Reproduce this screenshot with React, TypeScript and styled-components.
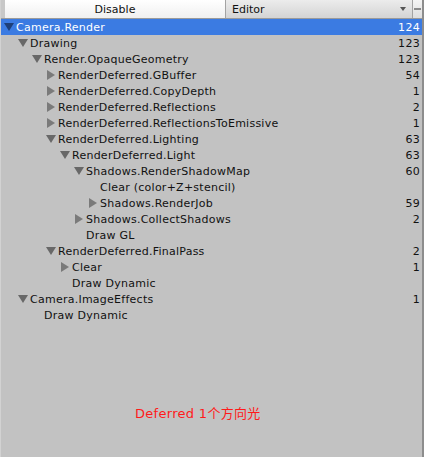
import React from 'react';
import styled, { createGlobalStyle } from 'styled-components';

const Global = createGlobalStyle`
  html, body {
    margin: 0;
    padding: 0;
    background: #c2c2c2;
  }
  body {
    font-family: 'DejaVu Sans', 'Noto Sans CJK SC', sans-serif;
    font-size: 11px;
  }
`;

const Panel = styled.div`
  width: 424px;
  height: 457px;
  display: flex;
  flex-direction: column;
  background: #c2c2c2;
  border-right: 2px solid #8d8d8d;
  border-left: 1px solid #d2d2d2;
  box-sizing: border-box;
  overflow: hidden;
`;

const Toolbar = styled.div`
  display: flex;
  height: 19px;
  border-bottom: 1px solid #9a9a9a;
  box-sizing: border-box;
  background: linear-gradient(#f4f4f4, #dedede);
`;

const ToggleCell = styled.div`
  width: 225px;
  display: flex;
  align-items: center;
  justify-content: center;
  color: #111;
  background: linear-gradient(#ffffff, #f0f0f0);
  border-left: 4px solid #c8c8c8;
  border-right: 1px solid #a3a3a3;
  box-sizing: border-box;
`;

const Dropdown = styled.div`
  flex: 1;
  display: flex;
  align-items: center;
  justify-content: space-between;
  padding: 0 6px 0 6px;
  color: #111;
  background: linear-gradient(#ececec, #d4d4d4);
  border-right: 1px solid #a3a3a3;
`;

const Caret = styled.span`
  width: 0;
  height: 0;
  border-left: 3px solid transparent;
  border-right: 3px solid transparent;
  border-top: 4px solid #555;
`;

const Minus = styled.div`
  width: 9px;
  display: flex;
  align-items: center;
  justify-content: center;
  &::after {
    content: '';
    width: 7px;
    height: 2px;
    background: #8a8a8a;
  }
`;

const Tree = styled.div`
  display: flex;
  flex-direction: column;
`;

const Row = styled.div<{ $selected?: boolean; $level: number }>`
  height: 16px;
  display: flex;
  align-items: center;
  padding-left: ${(p) => 1 + p.$level * 14}px;
  padding-right: 2px;
  background: ${(p) => (p.$selected ? '#3b7be2' : 'transparent')};
  color: ${(p) => (p.$selected ? '#fff' : '#111')};
`;

const Arrow = styled.span<{ $open?: boolean; $show: boolean }>`
  width: 14px;
  height: 16px;
  display: flex;
  align-items: center;
  justify-content: center;
  flex: none;
  &::before {
    content: '';
    display: ${(p) => (p.$show ? 'block' : 'none')};
    width: 0;
    height: 0;
    ${(p) =>
      p.$open
        ? `border-left: 5px solid transparent;
           border-right: 5px solid transparent;
           border-top: 8px solid #686868;`
        : `border-top: 5px solid transparent;
           border-bottom: 5px solid transparent;
           border-left: 8px solid #7a7a7a;`}
  }
`;

const SelArrow = styled(Arrow)`
  &::before {
    border-top-color: #1e3f78;
  }
`;

const Label = styled.span`
  flex: 1;
  white-space: nowrap;
  letter-spacing: 0.25px;
`;

const Count = styled.span`
  letter-spacing: 0.3px;
`;

const Note = styled.div`
  margin-top: 80px;
  padding-left: 134px;
  color: #ff1a1a;
  font-size: 13px;
  letter-spacing: 0.3px;
  font-family: 'DejaVu Sans', 'Noto Sans CJK SC', sans-serif;
`;

type Item = { name: string; level: number; open?: boolean; leaf?: boolean; count?: number };

const items: Item[] = [
  { name: 'Camera.Render', level: 0, open: true, count: 124 },
  { name: 'Drawing', level: 1, open: true, count: 123 },
  { name: 'Render.OpaqueGeometry', level: 2, open: true, count: 123 },
  { name: 'RenderDeferred.GBuffer', level: 3, count: 54 },
  { name: 'RenderDeferred.CopyDepth', level: 3, count: 1 },
  { name: 'RenderDeferred.Reflections', level: 3, count: 2 },
  { name: 'RenderDeferred.ReflectionsToEmissive', level: 3, count: 1 },
  { name: 'RenderDeferred.Lighting', level: 3, open: true, count: 63 },
  { name: 'RenderDeferred.Light', level: 4, open: true, count: 63 },
  { name: 'Shadows.RenderShadowMap', level: 5, open: true, count: 60 },
  { name: 'Clear (color+Z+stencil)', level: 6, leaf: true },
  { name: 'Shadows.RenderJob', level: 6, count: 59 },
  { name: 'Shadows.CollectShadows', level: 5, count: 2 },
  { name: 'Draw GL', level: 5, leaf: true },
  { name: 'RenderDeferred.FinalPass', level: 3, open: true, count: 2 },
  { name: 'Clear', level: 4, count: 1 },
  { name: 'Draw Dynamic', level: 4, leaf: true },
  { name: 'Camera.ImageEffects', level: 1, open: true, count: 1 },
  { name: 'Draw Dynamic', level: 2, leaf: true },
];

const App: React.FC = () => (
  <>
    <Global />
    <Panel>
      <Toolbar>
        <ToggleCell>Disable</ToggleCell>
        <Dropdown>
          Editor
          <Caret />
        </Dropdown>
        <Minus />
      </Toolbar>
      <Tree>
        {items.map((it, i) => {
          const A = i === 0 ? SelArrow : Arrow;
          return (
            <Row key={i} $level={it.level} $selected={i === 0}>
              <A $show={!it.leaf} $open={it.open} />
              <Label>{it.name}</Label>
              {it.count !== undefined && <Count>{it.count}</Count>}
            </Row>
          );
        })}
      </Tree>
      <Note>Deferred 1个方向光</Note>
    </Panel>
  </>
);

export default App;
